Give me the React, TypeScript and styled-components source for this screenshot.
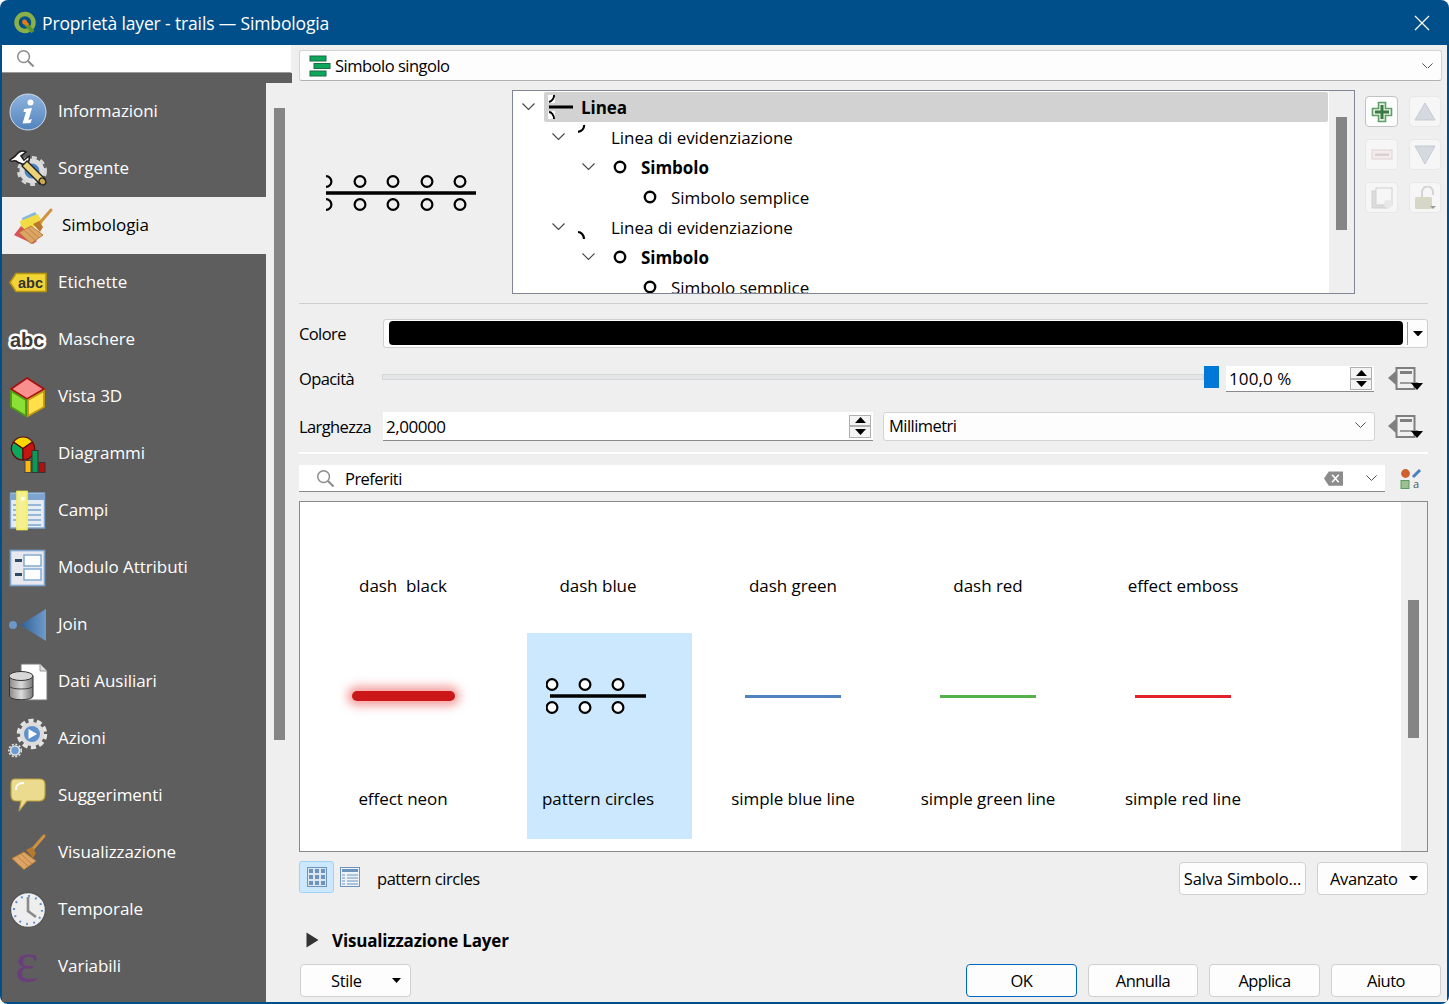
import React from "react";
import styled, { createGlobalStyle } from "styled-components";

const Global = createGlobalStyle`
  html, body { margin: 0; padding: 0; background: #ffffff; }
  body { font-family: "Open Sans", "Noto Sans", sans-serif; font-size: 16.5px; letter-spacing: -0.55px; color: #000; }
  * { box-sizing: border-box; }
`;

const Window = styled.div`
  width: 1449px; height: 1004px; display: flex; flex-direction: column; overflow: hidden;
  background: #004e8a; border-radius: 8px; padding: 0 2px 2px 2px;
`;
const TitleBar = styled.div`
  height: 45px; flex: none; display: flex; align-items: center; padding-left: 11px; color: #fff; font-size: 17.5px; letter-spacing: -0.14px;
`;
const TitleText = styled.span` margin-left: 5px; flex: 1; `;
const CloseBox = styled.div` width: 50px; display: flex; justify-content: center; `;
const Body = styled.div` flex: 1; display: flex; min-height: 0; background: #efefef; `;

const Sidebar = styled.div` width: 290px; flex: none; display: flex; flex-direction: column; `;
const SideSearch = styled.div`
  height: 28px; flex: none; background: #fff; border-bottom: 1px solid #9a9a9a; display: flex; align-items: center; padding-left: 14px; margin-right: 1px;
`;
const SideStrip = styled.div` height: 10px; flex: none; background: #5e5e5e; `;
const SideBody = styled.div` flex: 1; display: flex; min-height: 0; `;
const SideList = styled.div` width: 264px; flex: none; background: #5e5e5e; display: flex; flex-direction: column; `;
const SideItem = styled.div<{ $active?: boolean }>`
  height: 57px; flex: none; display: flex; align-items: center; font-size: 17px; letter-spacing: -0.05px; color: ${p => (p.$active ? "#000" : "#fff")};
  background: ${p => (p.$active ? "#efefef" : "transparent")}; padding-left: ${p => (p.$active ? 11 : 7)}px;
`;
const SideIcon = styled.div` width: 39px; height: 40px; flex: none; display: flex; align-items: center; `;
const SideLabel = styled.span` margin: -2px 0 0 10px; `;
const SideTrack = styled.div` flex: 1; padding: 25px 7px 0 8px; `;
const SideThumb = styled.div` width: 11px; height: 632px; background: #858585; `;

const Main = styled.div` flex: 1; min-width: 0; display: flex; flex-direction: column; padding: 5px 0 0 7px; `;
const RendererCombo = styled.div`
  width: 1143px; height: 31px; flex: none; background: #fdfdfd; border: 1px solid #d4d4d4; border-bottom-color: #b0b0b0; border-radius: 3px;
  display: flex; align-items: center; padding: 0 8px 0 9px; gap: 4px; letter-spacing: -0.5px;
`;
const Grow = styled.span` flex: 1; `;
const SymbolSection = styled.div` height: 222px; flex: none; display: flex; `;
const Preview = styled.div` width: 213px; flex: none; display: flex; align-items: center; padding: 1px 0 0 27px; `;
const Tree = styled.div`
  width: 843px; height: 204px; margin-top: 9px; flex: none; background: #fff; border: 1px solid #7f8795; display: flex; overflow: hidden;
  font-size: 17px; letter-spacing: -0.05px;
`;
const TreeRows = styled.div` width: 816px; flex: none; padding-top: 1px; `;
const TreeRow = styled.div<{ $level: number }>`
  height: 30px; display: flex; align-items: center; padding-left: ${p => 8 + p.$level * 30}px; flex: none;
`;
const ChevronSlot = styled.div<{ $lift?: number }>` width: 15px; flex: none; display: flex; justify-content: center; margin-top: ${p => -(p.$lift ?? 0)}px; `;
const TreeContent = styled.div<{ $active?: boolean; $bold?: boolean }>`
  flex: 1; height: 30px; display: flex; align-items: center; margin: 0 1px 0 8px; padding-left: 4px; gap: 4px; font-weight: ${p => (p.$bold ? 700 : 400)};
  background: ${p => (p.$active ? "#d2d2d2" : "transparent")}; border-radius: 2px;
`;
const TreeGlyph = styled.div<{ $pad?: number }>` width: 29px; height: 30px; flex: none; display: flex; align-items: center; padding-left: ${p => p.$pad ?? 0}px; `;
const TreeTrack = styled.div` flex: 1; background: #efefef; padding: 26px 7px 0 7px; `;
const TreeThumb = styled.div` width: 11px; height: 113px; background: #858585; `;
const SymbolButtons = styled.div` display: grid; grid-template-columns: 33px 32px; column-gap: 11px; row-gap: 12px; margin: 15px 0 0 10px; align-content: start; `;
const SquareButton = styled.div<{ $enabled?: boolean }>`
  height: 31px; border-radius: 4px; display: flex; align-items: center; justify-content: center;
  background: ${p => (p.$enabled ? "#fdfdfd" : "#f6f6f6")}; border: 1px solid ${p => (p.$enabled ? "#c2c2c2" : "#e8e8e8")};
`;
const Separator = styled.div<{ $light?: boolean; $top: number; $height: number }>`
  width: 1129px; height: ${p => p.$height}px; flex: none; margin-top: ${p => p.$top}px; background: ${p => (p.$light ? "#fff" : "#cfcfcf")};
`;
const FormRow = styled.div<{ $top: number; $height: number }>`
  width: 1129px; height: ${p => p.$height}px; margin-top: ${p => p.$top}px; flex: none; display: flex; align-items: center;
`;
const FormLabel = styled.div<{ $lift?: number }>` width: 84px; flex: none; letter-spacing: -0.6px; margin-top: ${p => -(p.$lift ?? 0)}px; `;
const ColorButton = styled.div`
  flex: 1; height: 29px; background: #fdfdfd; border: 1px solid #d0d0d0; border-radius: 3px; display: flex; align-items: center; padding: 0 4px 0 5px;
`;
const ColorFill = styled.div` flex: 1; height: 24px; background: #000; border-radius: 4px; margin-top: -1px; `;
const ColorDivider = styled.div` width: 1px; height: 23px; background: #9a9a9a; margin: 0 5px 0 4px; `;
const Slider = styled.div` width: 837px; flex: none; height: 22px; display: flex; align-items: center; margin: -4px 0 0 -1px; `;
const SliderTrack = styled.div` flex: 1; height: 6px; background: #e3e6e6; border: 1px solid #d6d8d8; `;
const SliderHandle = styled.div` width: 15px; height: 22px; background: #0078d7; `;
const SpinField = styled.div<{ $width: number; $height?: number; $left?: number; $spacing?: number }>`
  width: ${p => p.$width}px; flex: none; height: ${p => p.$height ?? 26}px; margin-left: ${p => p.$left ?? 0}px; background: #fff; border-bottom: 1px solid #8a8a8a;
  display: flex; align-items: center; padding: 0 2px 0 3px; gap: 4px; font-size: 17px; letter-spacing: ${p => p.$spacing ?? -0.45}px;
`;
const SpinButtons = styled.div` width: 22px; flex: none; display: flex; flex-direction: column; `;
const SpinButton = styled.div` height: 11.5px; border: 1px solid #b0b0b0; background: #f4f4f4; display: flex; align-items: center; justify-content: center; `;
const DDButton = styled.div<{ $left: number }>` width: 36px; flex: none; margin-left: ${p => p.$left}px; display: flex; `;
const UnitCombo = styled.div`
  width: 492px; flex: none; height: 29px; margin: -1px 0 0 10px; background: #fdfdfd; border: 1px solid #d4d4d4; border-radius: 3px; display: flex; align-items: center; padding: 0 8px 2px 5px;
`;
const SearchRow = styled.div` height: 27px; margin-top: 11px; flex: none; display: flex; align-items: center; `;
const SearchField = styled.div`
  width: 1086px; height: 27px; flex: none; background: #fff; border-bottom: 1px solid #8a8a8a; display: flex; align-items: center; padding: 0 8px 0 17px; gap: 10px;
`;
const ClearIcon = styled.svg` margin-right: 13px; flex: none; `;
const StyleManager = styled.div` margin-left: 15px; display: flex; `;
const SymbolList = styled.div`
  width: 1129px; height: 351px; margin-top: 9px; flex: none; background: #fff; border: 1px solid #8a8a8a; display: flex; overflow: hidden;
  font-size: 17px; letter-spacing: -0.05px;
`;
const SymbolGrid = styled.div` width: 1101px; flex: none; padding-left: 5.5px; `;
const GridRow = styled.div<{ $height: number }>` height: ${p => p.$height}px; display: flex; `;
const Cell = styled.div` width: 195px; flex: none; position: relative; display: flex; flex-direction: column; align-items: center; `;
const Highlight = styled.div` position: absolute; left: 26px; top: 0; width: 165px; height: 206px; background: #cce8ff; `;
const CellIcon = styled.div` position: relative; height: 126px; width: 100%; display: flex; align-items: center; justify-content: center; `;
const CellLabel = styled.div<{ $top: number }>` position: relative; margin-top: ${p => p.$top}px; line-height: 26px; white-space: pre; `;
const ListTrack = styled.div` flex: 1; background: #efefef; padding: 98px 8px 0 7px; `;
const ListThumb = styled.div` width: 11px; height: 138px; background: #858585; `;
const LineSample = styled.div<{ $color: string }>` width: 96px; height: 3px; background: ${p => p.$color}; `;
const NeonLine = styled.div`
  width: 103px; height: 10px; background: #cb1717; border-radius: 5px; box-shadow: 0 0 10px 5px rgba(235, 70, 70, 0.5);
`;
const ActionRow = styled.div` width: 1129px; height: 34px; margin-top: 9px; flex: none; display: flex; align-items: center; `;
const ViewToggle = styled.div<{ $active?: boolean }>`
  width: 35px; height: 32px; flex: none; border-radius: 3px; display: flex; align-items: center; justify-content: center; margin-top: -2px;
  background: ${p => (p.$active ? "#cce8ff" : "transparent")}; border: 1px solid ${p => (p.$active ? "#9fd2f7" : "transparent")};
`;
const ViewToggleSmall = styled(ViewToggle)` width: 24px; margin-left: 4px; `;
const SelectedName = styled.span` margin-left: 15px; flex: 1; letter-spacing: -0.45px; `;
const PushButton = styled.div<{ $width: number; $default?: boolean; $gap?: number; $spacing?: number }>`
  width: ${p => p.$width}px; height: 33px; flex: none; margin-left: ${p => p.$gap ?? 0}px; border-radius: 4px; background: #fdfdfd;
  border: 1px solid ${p => (p.$default ? "#0067c0" : "#d0d0d0")}; display: flex; align-items: center; justify-content: center;
  letter-spacing: ${p => p.$spacing ?? -0.55}px;
`;
const MenuButton = styled(PushButton)<{ $pad: number }>`
  justify-content: space-between; padding: 0 9px 0 ${p => p.$pad}px; letter-spacing: -0.4px;
`;
const Collapsed = styled.div` height: 20px; margin-top: 35px; flex: none; display: flex; align-items: center; font-weight: 700; font-size: 17px; letter-spacing: -0.17px; padding-left: 7px; gap: 13px; `;
const Footer = styled.div` width: 1142px; height: 33px; margin-top: 14px; padding-left: 1px; flex: none; display: flex; align-items: center; `;
const Spacer = styled.div` flex: 1; `;

const Search = () => (
  <svg width="19" height="19" viewBox="0 0 20 20"><circle cx="8" cy="8" r="6.2" fill="none" stroke="#8c8c8c" strokeWidth="1.6" /><path d="M12.6 12.6 L18.5 18.5" stroke="#8c8c8c" strokeWidth="2.2" /></svg>
);
const Chevron = ({ w = 11 }: { w?: number }) => (
  <svg width={w} height={w * 0.54} viewBox="0 0 13 7"><path d="M0.5 0.5 L6.5 6.5 L12.5 0.5" fill="none" stroke="#444" strokeWidth="1.1" /></svg>
);
const CaretDown = ({ w = 11 }: { w?: number }) => (
  <svg width={w} height={w * 0.55} viewBox="0 0 10 5.5"><path d="M0 0 H10 L5 5.5 Z" fill="#000" /></svg>
);
const CaretUp = () => (
  <svg width="11" height="6" viewBox="0 0 10 5.5"><path d="M0 5.5 H10 L5 0 Z" fill="#000" /></svg>
);
const DataDefined = () => (
  <svg width="36" height="26" viewBox="0 0 36 26">
    <path d="M0 12 L8 5 V19 Z" fill="#7f7f7f" />
    <rect x="8.5" y="2" width="18" height="21" fill="#f0f0f0" stroke="#7f7f7f" strokeWidth="2" />
    <rect x="12" y="5" width="12" height="3" fill="#7f7f7f" />
    <path d="M12 17 H30" stroke="#7f7f7f" strokeWidth="1.5" />
    <path d="M23 17 H35 L29 24 Z" fill="#000" />
  </svg>
);
const Ring = () => (
  <svg width="14" height="14" viewBox="0 0 14 14" style={{ flex: "none" }}><circle cx="7" cy="7" r="5.2" fill="none" stroke="#000" strokeWidth="2.4" /></svg>
);
const TreeLineIcon = () => (
  <svg width="29" height="30" viewBox="0 0 29 30">
    <rect x="0" y="3" width="7" height="8" fill="#fff" />
    <rect x="0" y="19" width="7" height="8" fill="#fff" />
    <path d="M6 3 C6.5 6 4 9 1 10" fill="none" stroke="#000" strokeWidth="2" />
    <path d="M1 20 C3.5 20 6 23 6 27" fill="none" stroke="#000" strokeWidth="2" />
    <path d="M1 15 H25" stroke="#000" strokeWidth="3" />
  </svg>
);
const ArcTop = () => (
  <svg width="9" height="30" viewBox="0 0 9 30"><path d="M6 3 C6.5 6 4 9 0 10" fill="none" stroke="#000" strokeWidth="2.2" /></svg>
);
const ArcBottom = () => (
  <svg width="9" height="30" viewBox="0 0 9 30"><path d="M0 20 C3 20 6 23 6 27" fill="none" stroke="#000" strokeWidth="2.2" /></svg>
);
const PatternCircles = ({ xs, width, x1, x2, fill }: { xs: number[]; width: number; x1: number; x2: number; fill: string }) => (
  <svg width={width} height="36" viewBox={`0 0 ${width} 36`}>
    {xs.map(x => (
      <g key={x}>
        <circle cx={x} cy="6.5" r="5.4" fill={fill} stroke="#000" strokeWidth="2.2" />
        <circle cx={x} cy="29.5" r="5.4" fill={fill} stroke="#000" strokeWidth="2.2" />
      </g>
    ))}
    <path d={`M${x1} 18 H${x2}`} stroke="#000" strokeWidth="3.6" />
  </svg>
);

const QgisLogo = () => (
  <svg width="24" height="24" viewBox="0 0 24 24">
    <circle cx="12" cy="11.5" r="8.5" fill="none" stroke="#8ab04a" strokeWidth="4.5" />
    <path d="M11 11 L20 21" stroke="#589632" strokeWidth="4" />
    <path d="M12 11 L15 14" stroke="#ee7913" strokeWidth="3" />
    <circle cx="11.5" cy="11" r="2.4" fill="#ee7913" />
  </svg>
);

const I = ({ children }: { children: React.ReactNode }) => (
  <svg width="38" height="40" viewBox="0 0 38 40" style={{ overflow: "visible" }}>{children}</svg>
);

const Brush = ({ t }: { t: string }) => (
  <g transform={t}>
    <path d="M35 3 L22 18" stroke="#d0923f" strokeWidth="3" strokeLinecap="round" />
    <path d="M17 17 L23 14 L27 20 L24 25 Z" fill="#b9782a" />
    <path d="M15 19 L27 28 L15 36.5 L3 25.5 Z" fill="#dca566" stroke="#bb7f37" strokeWidth="1" />
    <path d="M12 21 L23 31 M8.5 23.5 L19.5 33.5" stroke="#b57a35" strokeWidth="0.8" />
  </g>
);

const icons: Record<string, React.ReactNode> = {
  Informazioni: (
    <I>
      <defs><linearGradient id="gi" x1="0" y1="0" x2="0" y2="1"><stop offset="0" stopColor="#8fb4de" /><stop offset="1" stopColor="#5283bd" /></linearGradient></defs>
      <circle cx="19" cy="20" r="18" fill="url(#gi)" stroke="#cfdbea" strokeWidth="1" />
      <circle cx="21.5" cy="10.5" r="3" fill="#fff" />
      <path d="M15 17 L23 16 L19.5 28 L23 27 L21.5 31 L13.5 31.5 L17 20 L14.5 20 Z" fill="#fff" />
    </I>
  ),
  Sorgente: (
    <I>
      <circle cx="23" cy="22" r="10" fill="#4d84c2" stroke="#dcdcdc" strokeWidth="5" />
      <circle cx="23" cy="22" r="13.5" fill="none" stroke="#d5d5d5" strokeWidth="3" strokeDasharray="5 4" />
      <path d="M1 11 C3 9 6 8 8 5 C10 2 14 1 17 3 L12 7 L15 11 L20 7 C21 10 20 13 17 15 C14 16 10 14 7 12 C5 11 3 13 2 12 Z" fill="#fff" stroke="#222" strokeWidth="1.6" />
      <path d="M13 17 L18 12 L36 30 L31 35 Z" fill="#ead17a" stroke="#222" strokeWidth="1.4" />
      <ellipse cx="33.5" cy="32.5" rx="3" ry="3.6" transform="rotate(-45 33.5 32.5)" fill="#c9a84f" stroke="#222" strokeWidth="1.2" />
    </I>
  ),
  Simbologia: (
    <I>
      <path d="M9 12 L22 6 L28 14 L10 22 Z" fill="#86b8de" />
      <path d="M7 15 L25 8 L30 18 L9 25 Z" fill="#f2dc45" />
      <path d="M1 29 L8 20 L24 35 L20 38 Z" fill="#d9525a" />
      <Brush t="translate(3,1)" />
    </I>
  ),
  Etichette: (
    <I>
      <path d="M1 19.5 L7 10.5 H37 V28.5 H7 Z" fill="#f1d435" stroke="#b8960f" strokeWidth="1.6" />
      <text x="9" y="25" fontFamily="Liberation Sans, sans-serif" fontWeight="700" fontSize="14.5" letterSpacing="0" fill="#333">abc</text>
    </I>
  ),
  Maschere: (
    <I>
      <text x="1" y="27" fontFamily="Liberation Sans, sans-serif" fontWeight="700" fontSize="20" letterSpacing="0" fill="#3c3c3c" stroke="#fff" strokeWidth="5" strokeLinejoin="round" paintOrder="stroke">abc</text>
    </I>
  ),
  "Vista 3D": (
    <I>
      <path d="M18 1 L35 12 L18 22 L2 12 Z" fill="#f98f8f" stroke="#a81010" strokeWidth="1.8" />
      <path d="M2 14 L17 23 V39 L2 30 Z" fill="#8be035" stroke="#4f9a12" strokeWidth="1.8" />
      <path d="M19 23 L35 14 V30 L19 39 Z" fill="#ffe04a" stroke="#c19a10" strokeWidth="1.8" />
    </I>
  ),
  Diagrammi: (
    <I>
      <path d="M14 14.5 L4.5 8 A11.5 11.5 0 0 0 14 26 Z" fill="#0ba85c" stroke="#5a0b0b" strokeWidth="1.2" />
      <path d="M14 14.5 L4.5 8 A11.5 11.5 0 0 1 23.5 8 Z" fill="#fed700" stroke="#5a0b0b" strokeWidth="1.2" />
      <path d="M14 14.5 L23.5 8 A11.5 11.5 0 0 1 14 26 Z" fill="#c8140f" stroke="#5a0b0b" strokeWidth="1.2" />
      <rect x="16" y="26.5" width="6" height="12" fill="#fdb812" stroke="#444" strokeWidth="1" />
      <rect x="23" y="16.5" width="6" height="22" fill="#0a9a55" stroke="#333" strokeWidth="1" />
      <rect x="30" y="28.5" width="6" height="10" fill="#b01010" stroke="#333" strokeWidth="1" />
    </I>
  ),
  Campi: (
    <I>
      <rect x="1.5" y="2" width="34" height="35" fill="#e6ecf4" stroke="#7da5d0" strokeWidth="1.4" />
      <rect x="2" y="3" width="33" height="6" fill="#7da5d0" />
      <path d="M19 14 H32 M19 19 H32 M19 24 H32 M19 29 H32 M19 34 H32 M4 14 H7 M4 19 H7 M4 24 H7 M4 29 H7" stroke="#7da5d0" strokeWidth="1.6" />
      <rect x="8" y="0.5" width="10" height="38" fill="#f4f092" stroke="#f6ef5c" strokeWidth="1.6" />
      <rect x="12" y="6" width="3.5" height="3.5" fill="#fff" />
    </I>
  ),
  "Modulo Attributi": (
    <I>
      <rect x="1.5" y="2.5" width="34" height="35" fill="#e7e9ee" stroke="#7da5d0" strokeWidth="1.6" />
      <rect x="6" y="11" width="7" height="3" fill="#2f4a63" />
      <rect x="6" y="25" width="7" height="3" fill="#2f4a63" />
      <rect x="15" y="7" width="17" height="11" fill="#fdfdff" stroke="#7da5d0" strokeWidth="1.4" />
      <rect x="15" y="21" width="17" height="11" fill="#fdfdff" stroke="#7da5d0" strokeWidth="1.4" />
    </I>
  ),
  Join: (
    <I>
      <defs><linearGradient id="gj" x1="0" y1="0" x2="1" y2="0"><stop offset="0" stopColor="#2f5f94" /><stop offset="1" stopColor="#6f9bcb" /></linearGradient></defs>
      <circle cx="4" cy="20" r="4" fill="#6b98c9" />
      <path d="M11 20 L37 4 V36 Z" fill="url(#gj)" />
    </I>
  ),
  "Dati Ausiliari": (
    <I>
      <path d="M12 2 H31 L38 9 V38 H12 Z" fill="#fff" stroke="#777" strokeWidth="1" />
      <path d="M31 2 V9 H38" fill="#ddd" stroke="#999" strokeWidth="1" />
      <defs><linearGradient id="gd" x1="0" y1="0" x2="1" y2="0"><stop offset="0" stopColor="#8a8a8a" /><stop offset="0.5" stopColor="#dcdcdc" /><stop offset="1" stopColor="#777" /></linearGradient></defs>
      <path d="M0.5 14 V34 C0.5 39 24 39 24 34 V14 Z" fill="url(#gd)" stroke="#333" strokeWidth="1" />
      <ellipse cx="12" cy="14" rx="12" ry="4.5" fill="#d8d8d8" stroke="#333" strokeWidth="1" />
      <path d="M0.5 24 C0.5 28 24 28 24 24" fill="none" stroke="#444" strokeWidth="1" />
    </I>
  ),
  Azioni: (
    <I>
      <circle cx="23" cy="15" r="13" fill="none" stroke="#e4e4e4" strokeWidth="4.5" strokeDasharray="5 3.2" />
      <circle cx="23" cy="15" r="10" fill="#5d90cc" stroke="#dcdcdc" strokeWidth="4" />
      <path d="M19.5 10 L28 15 L19.5 20 Z" fill="#fff" />
      <circle cx="6" cy="31.5" r="4.5" fill="#6b9cd3" stroke="#e2e2e2" strokeWidth="1.6" />
      <circle cx="6" cy="31.5" r="6.2" fill="none" stroke="#e2e2e2" strokeWidth="1.6" strokeDasharray="2 1.6" />
    </I>
  ),
  Suggerimenti: (
    <I>
      <path d="M6 3 H30 C34 3 36 5 36 8 V19 C36 23 34 25 30 25 H18 L10 35 L12 25 H7 C4 25 2 23 2 19 V8 C2 5 3 3 6 3 Z" fill="#ebdb8e" stroke="#b9a13f" strokeWidth="1.2" />
      <path d="M7 14 C7 9 9 7 15 7" fill="none" stroke="#fff" strokeWidth="2" />
    </I>
  ),
  Visualizzazione: (<I><Brush t="translate(0,0)" /></I>),
  Temporale: (
    <I>
      <circle cx="19" cy="20" r="17.5" fill="#eeeeee" stroke="#555" strokeWidth="1.4" />
      <circle cx="19" cy="20" r="14" fill="none" stroke="#5d8fc8" strokeWidth="2.2" strokeDasharray="1.8 5.5" />
      <path d="M19 7 V21 L27 27" fill="none" stroke="#8a8a8a" strokeWidth="2.6" />
    </I>
  ),
  Variabili: (
    <I>
      <text x="6" y="33.5" fontFamily="Liberation Serif, serif" fontSize="56" letterSpacing="0" fill="#6b3d7c">ε</text>
    </I>
  ),
};

const sideItems = ["Informazioni", "Sorgente", "Simbologia", "Etichette", "Maschere", "Vista 3D", "Diagrammi", "Campi", "Modulo Attributi", "Join", "Dati Ausiliari", "Azioni", "Suggerimenti", "Visualizzazione", "Temporale", "Variabili"];

const TopLabels = ["dash  black", "dash blue", "dash green", "dash red", "effect emboss"];

const Spin = () => (
  <SpinButtons>
    <SpinButton><CaretUp /></SpinButton>
    <SpinButton><CaretDown /></SpinButton>
  </SpinButtons>
);

export default function App() {
  return (
    <>
      <Global />
      <Window>
        <TitleBar>
          <QgisLogo />
          <TitleText>Proprietà layer - trails — Simbologia</TitleText>
          <CloseBox>
            <svg width="16" height="16" viewBox="0 0 16 16"><path d="M1 1 L15 15 M15 1 L1 15" stroke="#fff" strokeWidth="1.3" /></svg>
          </CloseBox>
        </TitleBar>
        <Body>
          <Sidebar>
            <SideSearch><Search /></SideSearch>
            <SideStrip />
            <SideBody>
              <SideList>
                {sideItems.map(name => (
                  <SideItem key={name} $active={name === "Simbologia"}>
                    <SideIcon>{icons[name]}</SideIcon>
                    <SideLabel>{name}</SideLabel>
                  </SideItem>
                ))}
              </SideList>
              <SideTrack><SideThumb /></SideTrack>
            </SideBody>
          </Sidebar>
          <Main>
            <RendererCombo>
              <svg width="22" height="22" viewBox="0 0 22 22">
                <rect x="1" y="1" width="16" height="5" fill="#0ba85c" stroke="#1b6b43" />
                <rect x="5" y="8.5" width="16" height="5" fill="#0ba85c" stroke="#1b6b43" />
                <rect x="1" y="16" width="16" height="5" fill="#0ba85c" stroke="#1b6b43" />
              </svg>
              <span>Simbolo singolo</span>
              <Grow />
              <Chevron />
            </RendererCombo>
            <SymbolSection>
              <Preview>
                <PatternCircles xs={[0, 34, 67, 101, 134]} width={150} x1={0} x2={150} fill="none" />
              </Preview>
              <Tree>
                <TreeRows>
                  <TreeRow $level={0}><ChevronSlot><Chevron w={13} /></ChevronSlot>
                    <TreeContent $active $bold><TreeGlyph><TreeLineIcon /></TreeGlyph>Linea</TreeContent></TreeRow>
                  <TreeRow $level={1}><ChevronSlot><Chevron w={13} /></ChevronSlot>
                    <TreeContent><TreeGlyph><ArcTop /></TreeGlyph>Linea di evidenziazione</TreeContent></TreeRow>
                  <TreeRow $level={2}><ChevronSlot><Chevron w={13} /></ChevronSlot>
                    <TreeContent $bold><TreeGlyph $pad={5}><Ring /></TreeGlyph>Simbolo</TreeContent></TreeRow>
                  <TreeRow $level={3}><ChevronSlot />
                    <TreeContent><TreeGlyph $pad={5}><Ring /></TreeGlyph>Simbolo semplice</TreeContent></TreeRow>
                  <TreeRow $level={1}><ChevronSlot $lift={1}><Chevron w={13} /></ChevronSlot>
                    <TreeContent><TreeGlyph><ArcBottom /></TreeGlyph>Linea di evidenziazione</TreeContent></TreeRow>
                  <TreeRow $level={2}><ChevronSlot><Chevron w={13} /></ChevronSlot>
                    <TreeContent $bold><TreeGlyph $pad={5}><Ring /></TreeGlyph>Simbolo</TreeContent></TreeRow>
                  <TreeRow $level={3}><ChevronSlot />
                    <TreeContent><TreeGlyph $pad={5}><Ring /></TreeGlyph>Simbolo semplice</TreeContent></TreeRow>
                </TreeRows>
                <TreeTrack><TreeThumb /></TreeTrack>
              </Tree>
              <SymbolButtons>
                <SquareButton $enabled>
                  <svg width="22" height="22" viewBox="0 0 22 22"><path d="M7.5 1.5 H14.5 V7.5 H20.5 V14.5 H14.5 V20.5 H7.5 V14.5 H1.5 V7.5 H7.5 Z" fill="#e4f0e2" stroke="#5f9e66" strokeWidth="1.6" /><path d="M11 4 V18 M4 11 H18" stroke="#3b7a45" strokeWidth="3" /></svg>
                </SquareButton>
                <SquareButton>
                  <svg width="22" height="20" viewBox="0 0 22 20"><path d="M11 1 L21 18 H1 Z" fill="#d4dadf" stroke="#c4cbd1" /></svg>
                </SquareButton>
                <SquareButton>
                  <svg width="22" height="12" viewBox="0 0 22 12"><rect x="1" y="1" width="20" height="9" fill="#f4ecec" stroke="#e6dcdc" strokeWidth="1.4" /><rect x="4" y="4.5" width="14" height="2.4" fill="#d8d0d0" /></svg>
                </SquareButton>
                <SquareButton>
                  <svg width="22" height="20" viewBox="0 0 22 20"><path d="M1 1 H21 L11 19 Z" fill="#d4dadf" stroke="#c4cbd1" /></svg>
                </SquareButton>
                <SquareButton>
                  <svg width="22" height="22" viewBox="0 0 22 22"><rect x="1" y="4" width="16" height="17" fill="#dcdcdc" stroke="#cfcfcf" /><rect x="5" y="1" width="16" height="17" fill="#f6f6f6" stroke="#cfcfcf" /><circle cx="17" cy="17" r="4" fill="#e8e8e8" /></svg>
                </SquareButton>
                <SquareButton>
                  <svg width="22" height="24" viewBox="0 0 22 24"><path d="M8 12 V6 A5.5 5.5 0 0 1 19 6 V9" fill="none" stroke="#d4d4d4" strokeWidth="2" /><rect x="1" y="11" width="17" height="12" rx="1.5" fill="#d8d6c6" /><path d="M16 20 H22 L19 23 Z" fill="#9a9a9a" /></svg>
                </SquareButton>
              </SymbolButtons>
            </SymbolSection>
            <Separator $top={0} $height={1} />
            <FormRow $top={15} $height={29}>
              <FormLabel>Colore</FormLabel>
              <ColorButton>
                <ColorFill />
                <ColorDivider />
                <CaretDown w={10} />
              </ColorButton>
            </FormRow>
            <FormRow $top={18} $height={26}>
              <FormLabel $lift={2}>Opacità</FormLabel>
              <Slider><SliderTrack /><SliderHandle /></Slider>
              <SpinField $width={148} $left={7} $spacing={0.1}>
                <span>100,0 %</span>
                <Grow />
                <Spin />
              </SpinField>
              <DDButton $left={14}><DataDefined /></DDButton>
            </FormRow>
            <FormRow $top={20} $height={29}>
              <FormLabel>Larghezza</FormLabel>
              <SpinField $width={490} $height={29}>
                <span>2,00000</span>
                <Grow />
                <Spin />
              </SpinField>
              <UnitCombo>
                <span>Millimetri</span>
                <Grow />
                <Chevron />
              </UnitCombo>
              <DDButton $left={13}><DataDefined /></DDButton>
            </FormRow>
            <Separator $light $top={11} $height={2} />
            <SearchRow>
              <SearchField>
                <Search />
                <span>Preferiti</span>
                <Grow />
                <ClearIcon width="19" height="15" viewBox="0 0 20 15"><path d="M0 7.5 L5 0 H20 V15 H5 Z" fill="#8c8c8c" /><path d="M8.5 3.5 L15.5 11.5 M15.5 3.5 L8.5 11.5" stroke="#fff" strokeWidth="1.6" /></ClearIcon>
                <Chevron />
              </SearchField>
              <StyleManager>
                <svg width="22" height="24" viewBox="0 0 22 24">
                  <circle cx="5.5" cy="6.5" r="4.4" fill="#cf5f2e" />
                  <path d="M13 10 L20 3" stroke="#4a80bf" strokeWidth="3" />
                  <rect x="1" y="13.5" width="8" height="8" fill="#9cbf93" stroke="#5f9b60" />
                  <text x="13" y="21" fontFamily="Open Sans, sans-serif" fontSize="11" letterSpacing="0" fill="#555">a</text>
                </svg>
              </StyleManager>
            </SearchRow>
            <SymbolList>
              <SymbolGrid>
                <GridRow $height={131}>
                  {TopLabels.map(l => (
                    <Cell key={l}><CellLabel $top={71}>{l}</CellLabel></Cell>
                  ))}
                </GridRow>
                <GridRow $height={206}>
                  <Cell><CellIcon><NeonLine /></CellIcon><CellLabel $top={27}>effect neon</CellLabel></Cell>
                  <Cell>
                    <Highlight />
                    <CellIcon>
                      <PatternCircles xs={[6, 39, 72]} width={104} x1={4} x2={100} fill="#fff" />
                    </CellIcon>
                    <CellLabel $top={27}>pattern circles</CellLabel>
                  </Cell>
                  <Cell><CellIcon><LineSample $color="#4f83bf" /></CellIcon><CellLabel $top={27}>simple blue line</CellLabel></Cell>
                  <Cell><CellIcon><LineSample $color="#54b04a" /></CellIcon><CellLabel $top={27}>simple green line</CellLabel></Cell>
                  <Cell><CellIcon><LineSample $color="#e3202c" /></CellIcon><CellLabel $top={27}>simple red line</CellLabel></Cell>
                </GridRow>
              </SymbolGrid>
              <ListTrack><ListThumb /></ListTrack>
            </SymbolList>
            <ActionRow>
              <ViewToggle $active>
                <svg width="20" height="20" viewBox="0 0 20 20"><rect x="0.5" y="0.5" width="19" height="19" fill="#dbe6f2" stroke="#6d94bd" /><path d="M2 2 H6 V6 H2 Z M8 2 H12 V6 H8 Z M14 2 H18 V6 H14 Z M2 8 H6 V12 H2 Z M8 8 H12 V12 H8 Z M14 8 H18 V12 H14 Z M2 14 H6 V18 H2 Z M8 14 H12 V18 H8 Z M14 14 H18 V18 H14 Z" fill="#6d94bd" /></svg>
              </ViewToggle>
              <ViewToggleSmall>
                <svg width="20" height="20" viewBox="0 0 20 20"><rect x="0.5" y="0.5" width="19" height="19" fill="#eef3f8" stroke="#6d94bd" /><rect x="2" y="2" width="16" height="3" fill="#6d94bd" /><path d="M2 8 H5 M7 8 H18 M2 11 H5 M7 11 H18 M2 14 H5 M7 14 H18 M2 17 H5 M7 17 H18" stroke="#6d94bd" /></svg>
              </ViewToggleSmall>
              <SelectedName>pattern circles</SelectedName>
              <PushButton $width={127} $spacing={-0.15}>Salva Simbolo...</PushButton>
              <MenuButton $width={111} $gap={11} $pad={12}>Avanzato<CaretDown w={9} /></MenuButton>
            </ActionRow>
            <Collapsed>
              <svg width="13" height="16" viewBox="0 0 13 16"><path d="M0.5 0.5 L12.5 8 L0.5 15.5 Z" fill="#333" /></svg>
              Visualizzazione Layer
            </Collapsed>
            <Footer>
              <MenuButton $width={111} $pad={30}>Stile<CaretDown w={9} /></MenuButton>
              <Spacer />
              <PushButton $width={111} $default>OK</PushButton>
              <PushButton $width={110} $gap={11}>Annulla</PushButton>
              <PushButton $width={111} $gap={11}>Applica</PushButton>
              <PushButton $width={110} $gap={11}>Aiuto</PushButton>
            </Footer>
          </Main>
        </Body>
      </Window>
    </>
  );
}
